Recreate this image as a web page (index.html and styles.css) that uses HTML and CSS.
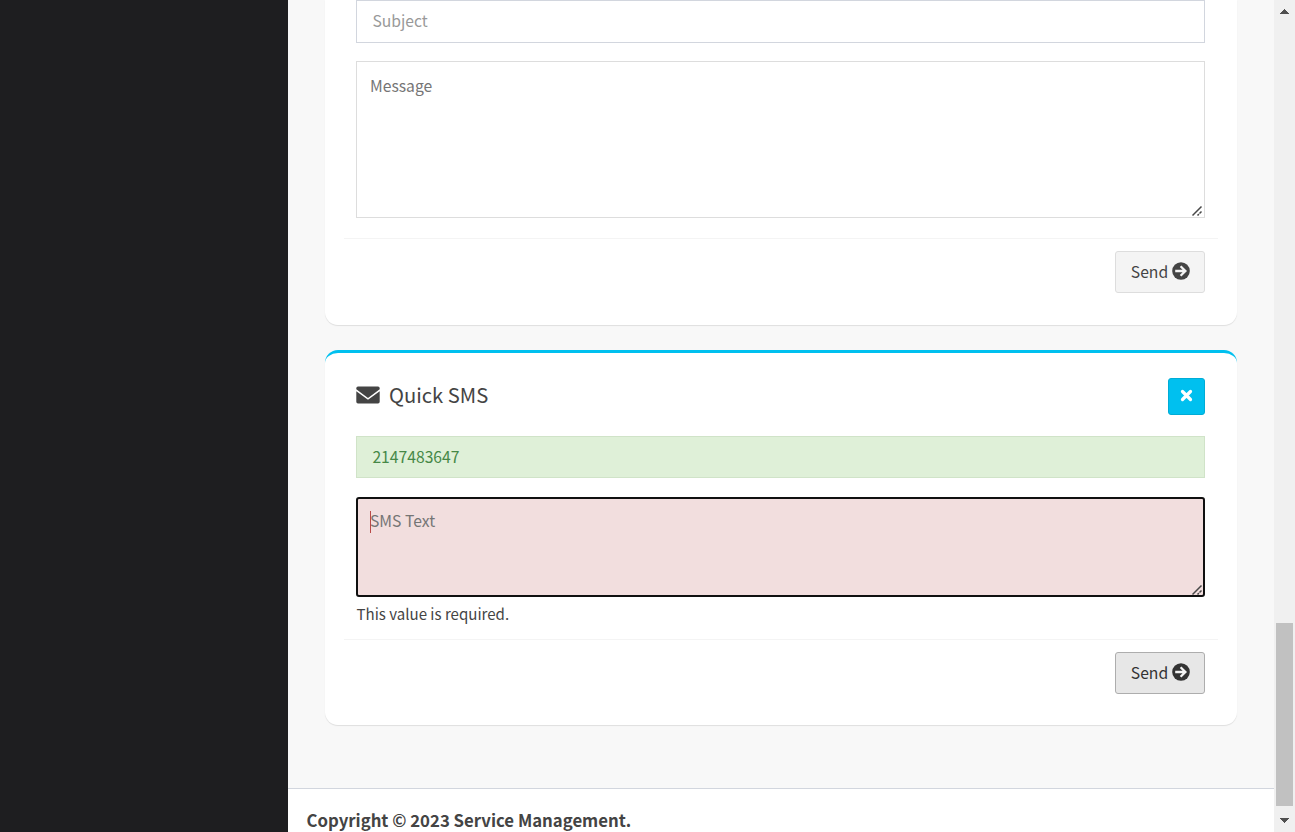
FILE: index.html
```html
<!DOCTYPE html>
<html lang="en">
<head>
<meta charset="utf-8">
<title>Service Management</title>
<link rel="stylesheet" href="styles.css">
</head>
<body>
<div class="app">
  <aside class="sidebar"></aside>
  <main class="main">
    <section class="content">
      <div class="card card-email">
        <div class="body">
          <input class="field" type="text" placeholder="Subject">
          <div class="area area-message">
            <textarea class="textarea" placeholder="Message"></textarea>
            <svg class="grip" viewBox="0 0 12 12"><path d="M1.500 10.500 10.500 1.500M6.500 10.500 7.900 9.100M8.500 8.500 10.500 6.500"/></svg>
          </div>
        </div>
        <div class="actions">
          <button class="btn" type="button">Send
            <svg class="arrow" viewBox="0 0 18 18"><circle cx="9" cy="9" r="8.800"/><path d="M3.200 9h9.500M8.600 4.200 13.400 9l-4.800 4.800"/></svg>
          </button>
        </div>
      </div>
      <div class="card card-sms">
        <header class="header">
          <svg class="mail" viewBox="0 0 24 18"><path d="M2 .5h20a1.700 1.700 0 0 1 1.700 1.700v1.100L12 12 .3 3.300V2.200A1.700 1.700 0 0 1 2 .5z"/><path d="M.3 5.200 12 13.700l11.700-8.500v10.600a1.700 1.700 0 0 1-1.700 1.700H2a1.700 1.700 0 0 1-1.700-1.700z"/></svg>
          <h3 class="title">Quick SMS</h3>
          <button class="close" type="button" aria-label="Close"><svg viewBox="0 0 12 12"><path d="M2.300 2.300 9.700 9.700M9.700 2.300 2.300 9.700"/></svg></button>
        </header>
        <div class="body">
          <input class="field field-valid" type="text" value="2147483647">
          <div class="area area-sms">
            <textarea class="textarea textarea-error" placeholder="SMS Text"></textarea>
            <span class="caret"></span>
            <svg class="grip" viewBox="0 0 12 12"><path d="M1.500 10.500 10.500 1.500M6.500 10.500 7.900 9.100M8.500 8.500 10.500 6.500"/></svg>
          </div>
          <p class="error">This value is required.</p>
        </div>
        <div class="actions">
          <button class="btn btn-active" type="button">Send
            <svg class="arrow" viewBox="0 0 18 18"><circle cx="9" cy="9" r="8.800"/><path d="M3.200 9h9.500M8.600 4.200 13.400 9l-4.800 4.800"/></svg>
          </button>
        </div>
      </div>
    </section>
    <footer class="footer">Copyright © 2023 Service Management.</footer>
  </main>
  <div class="scrollbar">
    <svg class="tick" viewBox="0 0 9 5"><path d="M4 0h1v1h1v1h1v1h1v1h1v1H0V4h1V3h1V2h1V1h1z"/></svg>
    <div class="thumb"></div>
    <svg class="tick" viewBox="0 0 9 5"><path d="M0 0h9v1H8v1H7v1H6v1H5v1H4V4H3V3H2V2H1V1H0z"/></svg>
  </div>
</div>
</body>
</html>
```
FILE: styles.css
```css
* { box-sizing: border-box; }

body {
  margin: 0;
  height: 832px;
  overflow: hidden;
  color: #444;
  font: 15.7px/25px "Noto Sans CJK JP", "Noto Sans CJK SC", sans-serif;
}

.app { display: flex; height: 832px; }
.sidebar { flex: 0 0 288px; background: #1e1e20; }
.main { flex: 1; min-width: 0; display: flex; flex-direction: column; background: #f8f8f8; }

.content {
  flex: 0 0 788px;
  display: flex;
  flex-direction: column;
  gap: 25px;
  padding: 0 37px;
}

.card { background: #fff; box-shadow: 0 1px 1px rgba(0, 0, 0, .1); }
.card-email { height: 325px; border-radius: 0 0 13px 13px; }
.card-sms { height: 375px; border-top: 3px solid #00c0ef; border-radius: 13px; }

.body { padding: 0 32px 0 31px; }

.field {
  display: block;
  width: 100%;
  height: 43px;
  padding: 0 15px 2px 15.4px;
  border: 1px solid #d2d6de;
  border-radius: 0;
  background: #fff;
  color: #444;
  font: inherit;
}
.field::placeholder { color: #999; opacity: 1; }
.field-valid { height: 42px; background: #dff0d8; border-color: #d0e3c8; color: #468847; }

.area { position: relative; }
.area-message { height: 157px; margin-top: 18px; }
.area-sms { height: 100px; margin-top: 19px; }

.textarea {
  display: block;
  width: 100%;
  height: 100%;
  padding: 11px 13px;
  border: 1px solid #ddd;
  border-radius: 0;
  outline: 0;
  resize: none;
  overflow: hidden;
  background: #fff;
  font: inherit;
}
.textarea::placeholder { color: #757575; }
.textarea-error { padding: 9px 12px; border: 2px solid #101010; border-radius: 3px; background: #f2dede; }

.caret { position: absolute; left: 14px; top: 14px; width: 1px; height: 22px; background: #b94a48; }
.grip { position: absolute; right: 2px; bottom: 1px; width: 12px; height: 12px; fill: none; stroke: #484848; stroke-width: 1.5; }

.error { margin: 4px 0 0; padding-left: .5px; font-size: 15.07px; line-height: 26px; }

.actions {
  display: flex;
  justify-content: flex-end;
  margin: 20px 19px 0;
  padding: 12px 13px 0 0;
  border-top: 1px solid #f4f4f4;
}
.card-sms .actions { margin-top: 12px; }

.btn {
  display: flex;
  align-items: center;
  justify-content: center;
  gap: 4px;
  width: 90px;
  height: 42px;
  padding: 0 0 2px 1px;
  border: 1px solid #ddd;
  border-radius: 3px;
  background: #f4f4f4;
  color: #444;
  font: inherit;
}
.btn-active { background: #e7e7e7; border-color: #adadad; color: #333; }
.arrow { width: 18px; height: 18px; fill: currentColor; }
.arrow path { fill: none; stroke: #f4f4f4; stroke-width: 2.3; }

.header { display: flex; align-items: center; height: 83px; padding: 4px 32px 0 31px; }
.mail { width: 24px; height: 18px; margin-top: -4px; fill: #444; }
.title { margin: -4px 0 0 9px; font-size: 20.2px; font-weight: 400; line-height: 24px; }
.close {
  display: grid;
  place-items: center;
  width: 37px;
  height: 37px;
  margin-left: auto;
  padding: 0 0 2px;
  border: 1px solid #00acd6;
  border-radius: 3px;
  background: #00c0ef;
}
.close svg { width: 13px; height: 13px; fill: none; stroke: #fff; stroke-width: 3; stroke-linecap: round; }

.footer {
  flex: 1;
  overflow: hidden;
  padding: 19px 18px 0 18.5px;
  border-top: 1px solid #d2d6de;
  background: #fff;
  font-size: 16.75px;
  font-weight: 700;
  white-space: nowrap;
}

.scrollbar {
  flex: 0 0 21px;
  display: flex;
  flex-direction: column;
  align-items: center;
  padding: 9px 0;
  background: #f0f0f0;
}
.tick { width: 9px; height: 5px; fill: #505050; shape-rendering: crispEdges; }
.thumb { width: 17px; height: 183px; margin: 609px 0 12px; background: #c1c1c1; }
```
